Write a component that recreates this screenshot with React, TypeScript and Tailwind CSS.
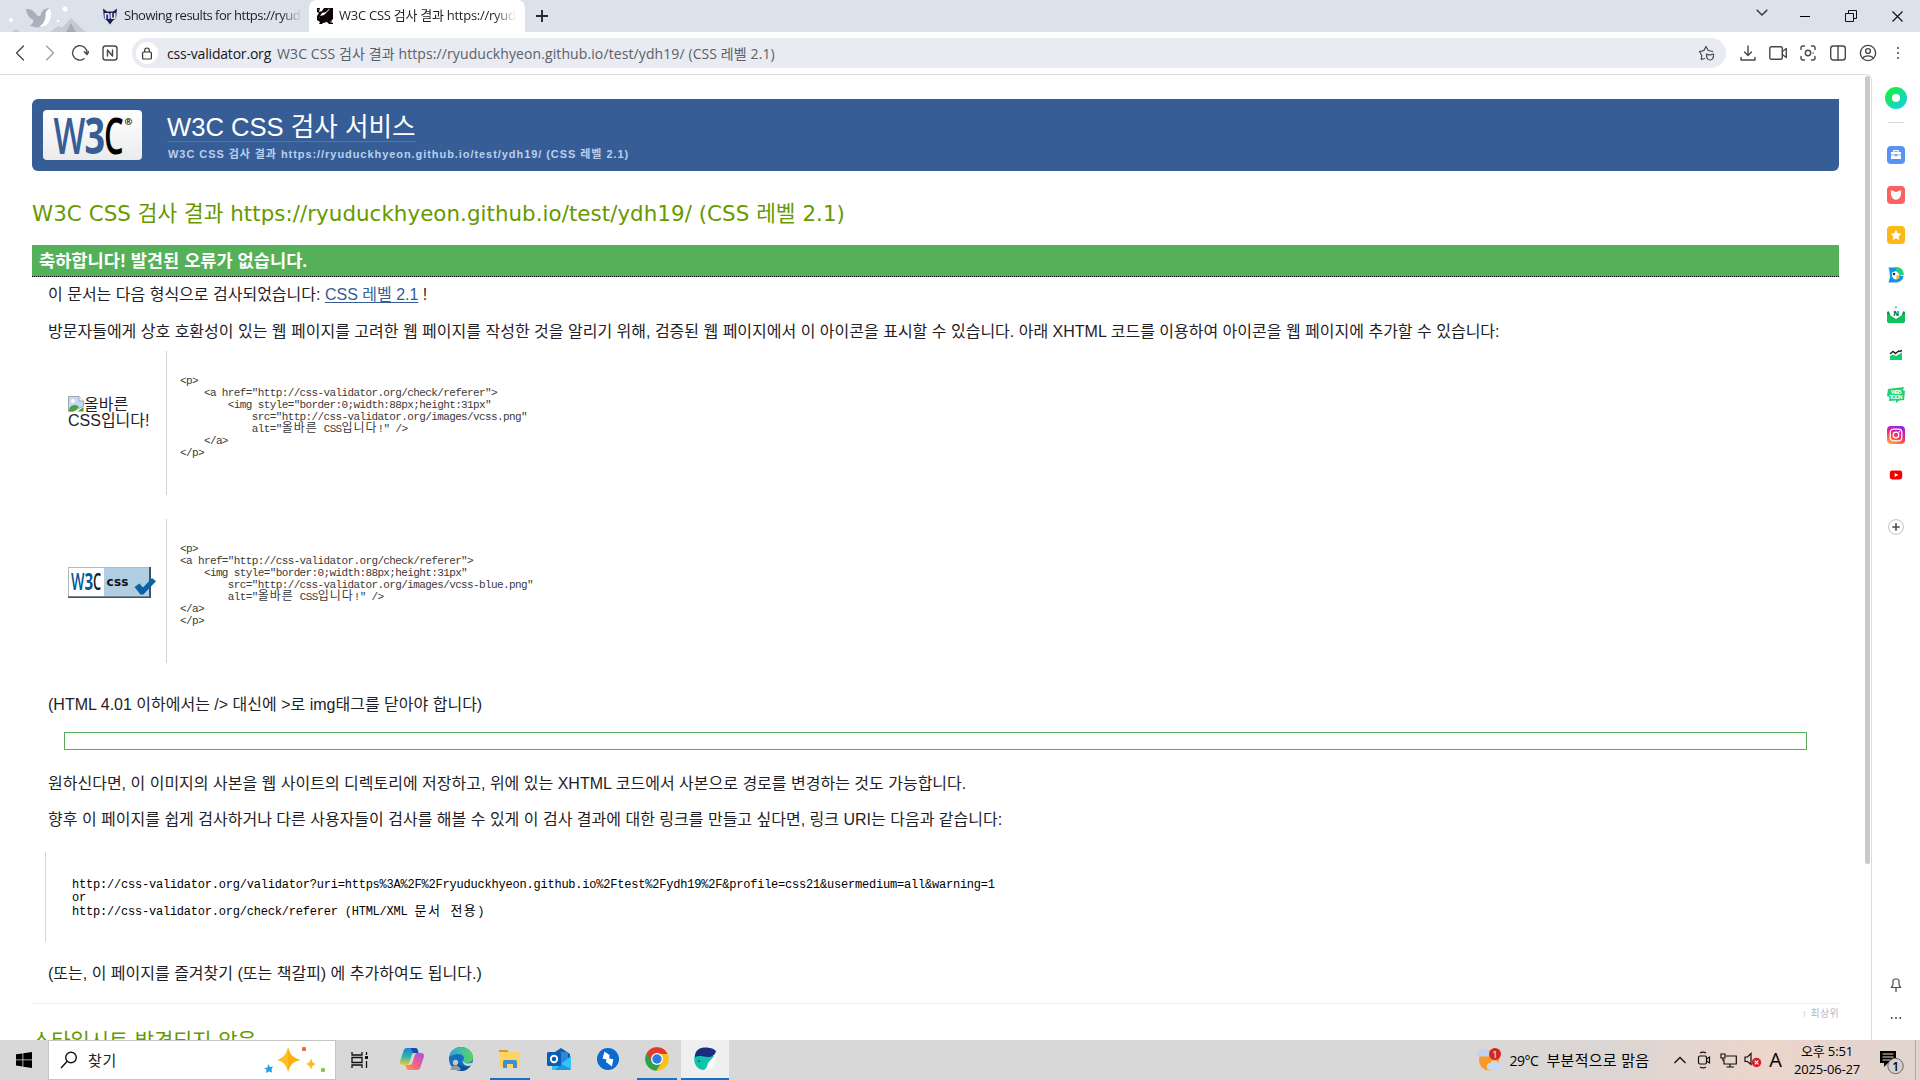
import type { ReactNode } from "react";

const UI = "font-['Open_Sans','Noto_Sans_CJK_KR',sans-serif]";

/* ---------- logos ---------- */

function W3CMark({ className, blue, dark }: { className: string; blue: string; dark: string }) {
  return (
    <svg viewBox="0 0 80 38" className={`overflow-visible ${className}`} fontFamily="Open Sans, sans-serif" fontWeight="600">
      <text transform="translate(-.5 37) scale(.66 1)" fontSize="51" fill={blue}>W</text>
      <text transform="translate(30.500 36.600) scale(.72 1)" fontSize="50" fontWeight="700" fill={blue}>3</text>
      <text transform="translate(50 36.600) scale(.62 1)" fontSize="50" fill={dark}>C</text>
      <text x="70.500" y="8" fontSize="9.500" fontWeight="700" fill={dark}>®</text>
    </svg>
  );
}

function CssBadge() {
  return (
    <svg viewBox="0 0 88 31" className="h-[31px] w-[88px]">
      <rect x="0" y="0" width="83" height="31" fill="#3f5361" />
      <rect x="0" y="0" width="81" height="29.5" fill="#b3b9be" />
      <rect x="1" y="1" width="35" height="28" fill="#ffffff" />
      <rect x="36" y="1" width="45" height="28" fill="#b0cde1" />
      <g fontFamily="Open Sans, sans-serif" fontWeight="600">
        <text transform="translate(3 22.500) scale(.62 1)" fontSize="23" fill="#005a9c">W</text>
        <text transform="translate(16.500 22.500) scale(.66 1)" fontSize="23" fontWeight="700" fill="#005a9c">3</text>
        <text transform="translate(25 22.500) scale(.56 1)" fontSize="23" fill="#1a1a1a">C</text>
      </g>
      <text x="38.5" y="18.5" fontSize="12" fontWeight="700" fontFamily="DejaVu Sans, sans-serif" fill="#111" textLength="22">css</text>
      <path d="M66.500 20l5-3.500 3.500 4L84 11l4 3.200-12.600 13.300h-3z" fill="#0b63a5" />
    </svg>
  );
}

function BrokenImage() {
  return (
    <svg viewBox="0 0 16 16" className="-mb-0.5 inline-block size-4 align-baseline">
      <path d="M.5 .5h10.500l4.500 4.500v5L5 15.500H.5z" fill="#c5d9f4" stroke="#a0a6ad" />
      <path d="M11 .5v4.500h4.500" fill="#fff" stroke="#a0a6ad" />
      <circle cx="5" cy="5" r="2" fill="#fff" />
      <path d="M1 15c0-4 3-6 6-6 2 0 3 1 4 2l-4.500 4z" fill="#4da13d" />
      <path d="M15.500 11v4.500H9.500z" fill="#4da13d" />
    </svg>
  );
}

/* ---------- browser chrome ---------- */

function WhaleStrip() {
  return (
    <svg viewBox="0 0 94 32" className="h-8 w-[94px] shrink-0">
      <path d="M50 32l8-6 4 2 9-10 6 6 9 8z" fill="#c5cbd4" />
      <path d="M66 32l5-9 5 9z" fill="#a7aeb9" />
      <path d="M12 32l4-3 4 3z" fill="#c3c9d2" />
      <circle cx="11" cy="20" r="2" fill="#fff" />
      <circle cx="65" cy="9" r="2.500" fill="#fff" />
      <circle cx="58" cy="21" r="1.300" fill="#fff" />
      <path d="M26 9c4-.5 8 1.500 10 5 2 3 4 3 5 0 1-4 5-6 9-6 2.500 7 1 14-4 17.500-5 3-13 2-16 0 2-1 3.500-3 3.500-5.500C29 18 26.500 14 26 9z" fill="#a9b0bb" />
      <path d="M50 8c2.500 7 1 14-4 17.500-2 1-4.500 1.500-7 1.300 5-3 7-7.800 6.500-13C46 11 48 9 50 8z" fill="#fff" />
    </svg>
  );
}

function Tabs() {
  return (
    <div className={`flex h-8 shrink-0 items-stretch bg-[#dce2ea] text-[13px] text-[#1d1f22] ${UI}`}>
      <WhaleStrip />
      <div className="flex w-[215px] items-center pl-2">
        <svg viewBox="0 0 16 16" className="h-[17px] w-4 shrink-0">
          <path d="M1 0l4 3h6l4-3-1 10-3 2-3 4-3-4-3-2z" fill="#231a52" />
          <text x="2" y="10" fontSize="10" fontWeight="700" fontFamily="Liberation Sans" fill="#fff">nu</text>
        </svg>
        <div className="ml-1.5 w-[178px] overflow-hidden whitespace-nowrap tracking-[-0.49px] [mask-image:linear-gradient(90deg,#000_88%,transparent)]">
          Showing results for https://ryudu
        </div>
      </div>
      <div className="flex w-[216px] items-center rounded-t-lg bg-white pl-2">
        <svg viewBox="0 0 16 16" className="size-4 shrink-0">
          <rect width="16" height="16" fill="#0b0505" />
          <path d="M3 0l-1 4 3-1 2-3zM0 4l2 1-2 3zM13 0l-4 4-4 1-2 3 4-1 5-5zM16 11l-3 3 3 1zM6 15l4-1 2 2H5zM0 12l3 2-1 2H0z" fill="#fff" />
          <path d="M1 1h1v1H1zM14 13h1v1h-1zM2 9h1v1H2z" fill="#a33" />
        </svg>
        <div className="ml-1.5 w-[177px] overflow-hidden whitespace-nowrap tracking-[-0.26px] [mask-image:linear-gradient(90deg,#000_88%,transparent)]">
          W3C CSS 검사 결과 https://ryud
        </div>
      </div>
      <svg viewBox="0 0 14 14" className="mt-[9px] ml-2.5 size-3.5" stroke="#26292d" strokeWidth="1.900">
        <path d="M7 1v12M1 7h12" />
      </svg>
      <div className="ml-auto flex items-center pr-[17px]">
        <svg viewBox="0 0 12 7" className="mr-8 mb-[7px] h-[7px] w-3" fill="none" stroke="#333" strokeWidth="1.300">
          <path d="M.7 .7L6 6l5.300-5.300" />
        </svg>
        <div className="mr-[35px] h-px w-2.5 bg-black" />
        <svg viewBox="0 0 12 12" className="mr-[35px] size-3" fill="none" stroke="#111" strokeWidth="1">
          <path d="M.5 3.500h8v8h-8zM3.500 3.500v-3h8v8h-3" />
        </svg>
        <svg viewBox="0 0 11 11" className="size-[11px]" stroke="#111" strokeWidth="1.200">
          <path d="M.5 .5l10 10M10.500 .5l-10 10" />
        </svg>
      </div>
    </div>
  );
}

function Icon({ className = "", children }: { className?: string; children: ReactNode }) {
  return (
    <svg viewBox="0 0 18 18" className={`size-[18px] shrink-0 ${className}`} fill="none" stroke="#45484d" strokeWidth="1.400" strokeLinecap="round" strokeLinejoin="round">
      {children}
    </svg>
  );
}

function Toolbar() {
  return (
    <div className={`flex h-[42px] shrink-0 items-center bg-white pl-[11px] text-[14px] ${UI}`}>
      <Icon className="mr-3"><path d="M12.500 2L5.500 9l7 7" /></Icon>
      <Icon className="mr-3"><path d="M5.500 2l7 7-7 7" stroke="#9b9ea3" /></Icon>
      <Icon className="mr-3">
        <path d="M13 14.700A7.200 7.200 0 1 1 16 9" />
        <path d="M13.300 7.700L16 10.500l2-3" />
      </Icon>
      <Icon className="mr-[13px]">
        <rect x="2" y="2" width="14" height="14" rx="2.500" />
        <path d="M6.500 12V6l5 6V6" />
      </Icon>
      <div className="mr-[13px] flex h-[30px] flex-1 items-center rounded-full bg-[#e8ebf2] pr-2.5 pl-1">
        <div className="flex size-[22px] items-center justify-center rounded-full bg-white">
          <svg viewBox="0 0 12 13" className="h-[13px] w-3" fill="none" stroke="#333" strokeWidth="1.200">
            <rect x="1.600" y="5" width="8.800" height="7" rx="1" />
            <path d="M3.700 5V3.300a2.300 2.300 0 0 1 4.600 0V5" />
          </svg>
        </div>
        <span className="ml-[9px] tracking-[-0.19px] text-[#17181a]">css-validator.org</span>
        <span className="ml-1.5 tracking-[0.1px] text-[#5c6066]">
          W3C CSS 검사 결과 https://ryuduckhyeon.github.io/test/ydh19/ (CSS 레벨 2.1)
        </span>
        <Icon className="ml-auto">
          <path d="M6.500 14.500l-3.200 1 .4-4.300L1.500 7.500 5.800 6.600 8 2.500l2.200 4 4.500 1" strokeWidth="1.200" />
          <path d="M8.500 10c1 0 1.500.3 2 .8h2.500c.5-.5 1-.8 2.500-.8.3 4-1 6-3.500 6s-3.700-2-3.500-6z" strokeWidth="1.200" />
        </Icon>
      </div>
      <div className="flex items-center gap-3 pr-[13px]">
        <Icon><path d="M9 2v9M5.500 8L9 11.500 12.500 8M2 13.500V16h14v-2.500" /></Icon>
        <Icon>
          <rect x=".8" y="2.800" width="12.500" height="12.400" rx="1.500" />
          <path d="M13.300 7.500L17.300 4.500v9l-4-3" />
        </Icon>
        <Icon>
          <path d="M2 5.500V4a2 2 0 0 1 2-2h1.500M12.500 2H14a2 2 0 0 1 2 2v1.500M16 12.500V14a2 2 0 0 1-2 2h-1.500M5.500 16H4a2 2 0 0 1-2-2v-1.500" />
          <circle cx="9" cy="9" r="2.700" />
          <path d="M14 9h.1" />
        </Icon>
        <Icon>
          <rect x="1.700" y="2" width="14.600" height="14" rx="2.500" />
          <path d="M9 2v14" />
        </Icon>
        <Icon>
          <circle cx="9" cy="9" r="7.600" />
          <circle cx="9" cy="7" r="2.400" />
          <path d="M3.800 14.300c1.500-3.300 8.900-3.300 10.400 0" />
        </Icon>
        <Icon><path d="M9 4v.1M9 9v.1M9 14v.1" strokeWidth="2" /></Icon>
      </div>
    </div>
  );
}

function Tile({ className = "", children }: { className?: string; children?: ReactNode }) {
  return (
    <div className={`mb-[22px] flex size-[18px] items-center justify-center ${className}`}>
      <svg viewBox="0 0 18 18" className="size-[18px]">{children}</svg>
    </div>
  );
}

function Sidebar() {
  return (
    <div className="flex w-12 shrink-0 flex-col items-center bg-white pt-[13px]">
      <div className="flex size-[22px] items-center justify-center rounded-full bg-[linear-gradient(135deg,#17ee4c_20%,#12cfe8_90%)]">
        <div className="size-2 rounded-full bg-white" />
      </div>
      <div className="mt-[13px] mb-[23px] h-px w-4 bg-[#d9dadc]" />
      <Tile className="rounded bg-[#5a93f2]">
        <path d="M4 6h10v2.500H4zM4 9.300h10V13H4z" fill="#fff" />
        <path d="M6.700 6V4.600h4.600V6" fill="none" stroke="#fff" strokeWidth="1.100" />
        <path d="M8 8.500h2v1.800H8z" fill="#5a93f2" />
      </Tile>
      <Tile className="rounded bg-[#fb6161]">
        <path d="M4 4.500c2 0 3.300 .5 4 1.500h2c.7-1 2-1.500 4-1.500.6 6-1.500 9.200-5 9.200S3.400 10.500 4 4.500z" fill="#fff" />
      </Tile>
      <Tile className="rounded bg-[#fbb816]">
        <path d="M9 3.800l1.700 3.400 3.600.5-2.600 2.600.6 3.700L9 12.200 5.700 14l.6-3.700L3.700 7.700l3.600-.5z" fill="#fff" />
      </Tile>
      <Tile>
        <path d="M1.500 1.500h5L10 1v8l6.500 1c0 3-3 6-7 6.500H1.500L3 11 2.500 5z" fill="#1295ef" />
        <path d="M8 1c5-.5 9 2.500 8.700 8H11z" fill="#24d07a" />
        <path d="M5 6.500l4-1.500 3 3v4l-3 1.500c-3 0-4.500-3-4-7z" fill="#fff" />
        <circle cx="7" cy="8" r="1.300" fill="#13355f" />
        <path d="M9.500 9h3c0 3-1 4-3.500 4.500z" fill="#fdc62e" />
      </Tile>
      <Tile>
        <path d="M0 6l9-5 9 5v8a3 3 0 0 1-3 3H3a3 3 0 0 1-3-3z" fill="#0b8a46" />
        <path d="M0 2l6 .5L9 .5l3 2 6-.5-3 6v2l-6 4-6-4V8z" fill="#fff" />
        <path d="M7.500 1.500L9 .3l1.500 1.200z" fill="#0b8a46" />
        <path d="M0 7l9 6 9-6v7.500a2.500 2.500 0 0 1-2.500 2.500h-13A2.500 2.500 0 0 1 0 14.500z" fill="#0fc25e" />
        <text x="6.200" y="9.500" fontSize="7" fontWeight="800" fontFamily="Open Sans" fill="#0b7a3d">N</text>
      </Tile>
      <Tile>
        <path d="M3 14V10l3-1.500 3 1.500 6-3.500V14z" fill="#14d069" />
        <path d="M3 8l3-2.500 2.500 2 3-2.500 1 .5L15 4.500" fill="none" stroke="#222" strokeWidth="1.400" />
      </Tile>
      <Tile>
        <path d="M1 3l16-2-1 3 2 1-1 9-5 .5-3 2.500v-2.500L2 15l.5-4L0 10z" fill="#1fd172" />
        <g fontFamily="Liberation Sans" fontSize="5.500" fontWeight="700" fill="#fff">
          <text x="4" y="8" textLength="10.500">WEB</text>
          <text x="2.500" y="12.500" textLength="13">TOON</text>
        </g>
      </Tile>
      <Tile className="rounded bg-[linear-gradient(25deg,#fdb13c_5%,#f8355b_45%,#d21bb5_65%,#7a2be8_95%)]">
        <g fill="none" stroke="#fff" strokeWidth="1.300">
          <rect x="3.200" y="3.200" width="11.600" height="11.600" rx="3.200" />
          <circle cx="9" cy="9" r="2.800" />
        </g>
        <circle cx="12.400" cy="5.600" r=".8" fill="#fff" />
      </Tile>
      <Tile>
        <rect x="2.800" y="4.500" width="12.400" height="9" rx="2.400" fill="#f00000" />
        <path d="M7.700 7l3.600 2-3.600 2z" fill="#fff" />
      </Tile>
      <svg viewBox="0 0 16 16" className="mt-[13px] size-4">
        <circle cx="8" cy="8" r="7.400" fill="#fff" stroke="#bfc1c4" />
        <path d="M8 4.300v7.400M4.300 8h7.400" stroke="#4a4d52" strokeWidth="1.600" />
      </svg>
      <svg viewBox="0 0 12 14" className="mt-auto mb-6 h-3.5 w-3" fill="none" stroke="#45484d" strokeWidth="1.200">
        <path d="M3 3a2 2 0 0 1 2-2h2a2 2 0 0 1 2 2v3.500l1.500 3h-9l1.500-3zM6 9.500V14" />
      </svg>
      <svg viewBox="0 0 12 4" className="mb-5 h-1 w-3" fill="#45484d">
        <circle cx="1.700" cy="2" r="1" /><circle cx="6" cy="2" r="1" /><circle cx="10.300" cy="2" r="1" />
      </svg>
    </div>
  );
}

/* ---------- validator page ---------- */

const ALT = (
  <span className="text-[12px] tracking-[0.95px]">올바른</span>
);
const ALT_END = (
  <span className="text-[12px] tracking-[0.95px]">입니다</span>
);

function CodeSample({ lines }: { lines: ReactNode[] }) {
  return (
    <div className="h-36 border-l border-[#d5d5d5] pt-6 pl-[13px] font-['Liberation_Mono','Noto_Sans_CJK_KR',monospace] text-[11px] tracking-[-0.62px] text-[#3a3a3a]">
      {lines.map((line, i) => (
        <div key={i} className="h-3 leading-3 whitespace-pre">{line}</div>
      ))}
    </div>
  );
}

function ValidatorPage() {
  return (
    <div className="min-w-0 flex-1 overflow-hidden pt-6 pr-[18px] pl-8 font-['Liberation_Sans','Noto_Sans_CJK_KR',sans-serif] text-[16px] whitespace-nowrap text-[#1f2126]">
      <div className="flex h-[72px] rounded-l-md rounded-br-md bg-[#365d95] pt-[11px] pl-[11px]">
        <div className="flex h-[50px] w-[99px] rounded bg-[linear-gradient(#ffffff,#ebebeb)] pt-[7px] pl-[11px]">
          <W3CMark className="h-[38px] w-20" blue="#365d95" dark="#000" />
        </div>
        <div className="ml-[25px]">
          <div className="h-[32px] w-[248px] border-b border-[#5075ab] text-[25.6px] leading-[34px] text-white">W3C CSS 검사 서비스</div>
          <div className="mt-1 pl-px text-[11px] leading-[16px] font-bold tracking-[0.94px] text-[#b9d0f0]">
            W3C CSS 검사 결과 https://ryuduckhyeon.github.io/test/ydh19/ (CSS 레벨 2.1)
          </div>
        </div>
      </div>

      <h2 className="mt-[27px] h-[30px] font-['DejaVu_Sans','Noto_Sans_CJK_KR',sans-serif] text-[21.4px] leading-[32px] tracking-[0.04px] text-[#669900]">
        W3C CSS 검사 결과 https://ryuduckhyeon.github.io/test/ydh19/ (CSS 레벨 2.1)
      </h2>

      <div className="mt-[17px] h-8 border-b border-dotted border-black bg-[#55b05a] pl-[7px] text-[17.6px] leading-[33px] font-bold text-white">
        축하합니다! 발견된 오류가 없습니다.
      </div>

      <div className="pl-4">
        <p className="mt-[7px] h-5 leading-[22px]">
          이 문서는 다음 형식으로 검사되었습니다:{" "}
          <a className="text-[#365d95] underline underline-offset-2">CSS 레벨 2.1</a> !
        </p>
        <p className="mt-[17px] h-5 leading-[22px]">
          방문자들에게 상호 호환성이 있는 웹 페이지를 고려한 웹 페이지를 작성한 것을 알리기 위해, 검증된 웹 페이지에서 이 아이콘을 표시할 수 있습니다. 아래 XHTML 코드를 이용하여 아이콘을 웹 페이지에 추가할 수 있습니다:
        </p>

        <div className="mt-2.5 flex">
          <div className="w-[118px] pt-[45px] pl-5 leading-4">
            <div><BrokenImage />올바른</div>
            <div>CSS입니다!</div>
          </div>
          <CodeSample
            lines={[
              "<p>",
              '    <a href="http://css-validator.org/check/referer">',
              '        <img style="border:0;width:88px;height:31px"',
              '            src="http://css-validator.org/images/vcss.png"',
              <>{'            alt="'}{ALT}{" CSS"}{ALT_END}{'!" />'}</>,
              "    </a>",
              "</p>",
            ]}
          />
        </div>
        <div className="mt-6 flex">
          <div className="w-[118px] pt-12 pl-5"><CssBadge /></div>
          <CodeSample
            lines={[
              "<p>",
              '<a href="http://css-validator.org/check/referer">',
              '    <img style="border:0;width:88px;height:31px"',
              '        src="http://css-validator.org/images/vcss-blue.png"',
              <>{'        alt="'}{ALT}{" CSS"}{ALT_END}{'!" />'}</>,
              "</a>",
              "</p>",
            ]}
          />
        </div>

        <p className="mt-[31px] h-5 leading-[22px]">(HTML 4.01 이하에서는 /&gt; 대신에 &gt;로 img태그를 닫아야 합니다)</p>
        <div className="mt-[18px] mr-8 ml-4 h-[18px] border border-[#55b05a]" />
        <p className="mt-[23px] h-5 leading-[22px]">
          원하신다면, 이 이미지의 사본을 웹 사이트의 디렉토리에 저장하고, 위에 있는 XHTML 코드에서 사본으로 경로를 변경하는 것도 가능합니다.
        </p>
        <p className="mt-4 h-5 leading-[22px]">
          향후 이 페이지를 쉽게 검사하거나 다른 사용자들이 검사를 해볼 수 있게 이 검사 결과에 대한 링크를 만들고 싶다면, 링크 URI는 다음과 같습니다:
        </p>
        <div className="mt-[23px] -ml-[3px] h-[90px] border-l border-[#d5d5d5] pt-[27px] pl-[26px] font-['Liberation_Mono','Noto_Sans_CJK_KR',monospace] text-[12px] leading-[13px] tracking-[-0.21px] text-black">
          <div>http://css-validator.org/validator?uri=https%3A%2F%2Fryuduckhyeon.github.io%2Ftest%2Fydh19%2F&amp;profile=css21&amp;usermedium=all&amp;warning=1</div>
          <div>or</div>
          <div className="h-[13px] leading-[13px]">http://css-validator.org/check/referer (HTML/XML <span className="text-[13px] tracking-[1.4px]">문서 전용</span>)</div>
        </div>
        <p className="mt-[21px] h-5 leading-[22px]">(또는, 이 페이지를 즐겨찾기 (또는 책갈피) 에 추가하여도 됩니다.)</p>
      </div>

      <div className="mt-5 h-px bg-[#ebebeb]" />
      <div className="mt-[3px] h-3.5 text-right text-[10px] leading-3.5 tracking-[0.3px] text-[#b3b8c4]">↑ 최상위</div>
      <h2 className="mt-[5px] font-['DejaVu_Sans','Noto_Sans_CJK_KR',sans-serif] text-[21px] leading-[30px] tracking-[-0.1px] text-[#669900]">
        스타일시트 발견되지 않음
      </h2>
    </div>
  );
}

/* ---------- taskbar ---------- */

function TaskIcon({ className = "", children }: { className?: string; children: ReactNode }) {
  return (
    <div className={`flex h-10 shrink-0 items-center justify-center border-b-2 ${className}`}>
      <svg viewBox="0 0 24 24" className="size-6">{children}</svg>
    </div>
  );
}

function Taskbar() {
  return (
    <div className={`flex h-10 shrink-0 items-center bg-[linear-gradient(90deg,#d8d8d8_0%,#d8d8d8_74%,#dcd6d3_84%,#ecd5cb_92%,#e0d4d0_100%)] text-black ${UI}`}>
      <div className="flex w-12 justify-center">
        <svg viewBox="0 0 16 16" className="size-4">
          <path d="M0 2.300L6.500 1.400v6.100H0zM7.300 1.300L16 0v7.500H7.300zM0 8.300h6.500v6.200L0 13.600zM7.300 8.300H16V16l-8.700-1.300z" />
        </svg>
      </div>
      <div className="flex h-full w-[288px] items-center border border-[#c4c4c4] bg-white pl-[11px]">
        <svg viewBox="0 0 18 18" className="size-[18px]" fill="none" stroke="#111" strokeWidth="1.400">
          <circle cx="11" cy="6.500" r="5.300" />
          <path d="M7 10.500L1 17" />
        </svg>
        <span className="ml-2.5 text-[15px] tracking-[0.8px] text-[#222]">찾기</span>
        <svg viewBox="0 0 64 32" className="mr-2 ml-auto h-8 w-16">
          <path d="M25 3c2 8 4 10 12 13-8 2-10 5-12 12-2-7-4-10-11-12 7-3 9-5 11-13z" fill="#fdc220" />
          <path d="M25 3c2 8 4 10 12 13-8 2-10 5-12 12V16z" fill="#f9b110" />
          <path d="M48 14c1 4 2 5 5 6-3 1-4 2-5 6-1-4-2-5-5-6 3-1 4-2 5-6z" fill="#fbb928" />
          <path d="M5 20l2 3 3-.5-1.500 3 .5 3-3-1-3 1.500.5-3.500L1 24l3.500-.5z" fill="#1fa4e6" />
          <circle cx="41" cy="5" r="2.200" fill="#ee6a33" />
          <circle cx="60" cy="26" r="2.200" fill="#8cc152" />
        </svg>
      </div>
      <div className="flex h-full w-12 items-center justify-center">
        <svg viewBox="0 0 18 16" className="h-4 w-[18px]" fill="none" stroke="#111" strokeWidth="1.300">
          <path d="M1 0v3h10V0M1 16v-3h10v3M1 5.500h10v5H1zM15.500 0v3M15.500 9v7" />
          <path d="M14 4h3v3h-3z" fill="#111" stroke="none" />
        </svg>
      </div>
      <TaskIcon className="ml-[3px] w-[49px] border-transparent">
        <defs>
          <linearGradient id="ribbonCool" x1="0" y1="0" x2="0" y2="1"><stop offset="0" stopColor="#1d7fe0" /><stop offset=".5" stopColor="#2fb6a8" /><stop offset="1" stopColor="#f0c63a" /></linearGradient>
          <linearGradient id="ribbonWarm" x1="1" y1="0" x2="0" y2="1"><stop offset="0" stopColor="#a455e8" /><stop offset=".5" stopColor="#ef5d8e" /><stop offset="1" stopColor="#ff9a4a" /></linearGradient>
        </defs>
        <path d="M7 1h8c2 0 2.500 1 3 3l.5 2h-4c-2 0-2.500 1-3 3l-2 6c-.6 2-1 3-3 3H3c-2 0-3.500-1-2.800-4L3.500 4C4 2 5 1 7 1z" fill="url(#ribbonCool)" />
        <path d="M11 1h4c2 0 2.500 1 3 3l.5 2h-4c-1.500 0-2-.5-3-3z" fill="#1a49b8" />
        <path d="M17 23H9c-2 0-2.500-1-3-3l-.5-2h4c2 0 2.500-1 3-3l2-6c.6-2 1-3 3-3H21c2 0 3.500 1 2.800 4L20.500 20c-.5 2-1.500 3-3.500 3z" fill="url(#ribbonWarm)" />
      </TaskIcon>
      <TaskIcon className="w-[49px] border-transparent">
        <defs>
          <linearGradient id="edgeWave" x1="0" y1="0" x2="1" y2="0"><stop offset="0" stopColor="#2aa5e6" /><stop offset="1" stopColor="#5ad65c" /></linearGradient>
        </defs>
        <circle cx="12" cy="12" r="12" fill="#1470bd" />
        <path d="M.5 10C2 3 7 0 12 0c7 0 12 5 12 10 0 4-3 6-6.500 6-3 0-4-1.500-3-3 1.500-3-1-6-5-6-4 0-7 1-9 3z" fill="url(#edgeWave)" />
        <path d="M9 12c-1 5 3 9 12 7-2 3-5 5-9 5-4-1-6-7-3-12z" fill="#0f4f96" />
        <path d="M13.500 13c1 3 4.500 4.500 10 2.500l-1 3c-5.500 1.500-9-1-9-5.500z" fill="#d8d8d8" />
        <circle cx="6.500" cy="15.500" r="2.700" fill="#c9c9c9" />
        <path d="M1.500 23c0-6 10-6 10 0z" fill="#9b9b9b" />
      </TaskIcon>
      <div className="flex w-[49px] justify-center">
        <TaskIcon className="w-10 border-[#1272c6]">
          <path d="M1 3h8l2 2H1z" fill="#d69a1e" />
          <path d="M1 5h20a1 1 0 0 1 1 1v14H1z" fill="#fcd364" />
          <path d="M5 21v-6a2 2 0 0 1 2-2h10a2 2 0 0 1 2 2v6h-4v-4H9v4z" fill="#3f8fd0" />
        </TaskIcon>
      </div>
      <TaskIcon className="w-[49px] border-transparent">
        <path d="M5 7l9-6 9 6v14a2 2 0 0 1-2 2H7a2 2 0 0 1-2-2z" fill="#0f5ca8" />
        <path d="M8 5h13v12H8z" fill="#2b87d8" />
        <path d="M5 12l9 5 10-8v12a2 2 0 0 1-2 2H5z" fill="#34c3f4" />
        <path d="M14 17l10 5-1.500 1H8z" fill="#1b98e4" />
        <rect y="5" width="14" height="14" rx="1.500" fill="#0a5cb5" />
        <circle cx="7" cy="12" r="3.200" fill="none" stroke="#fff" strokeWidth="1.900" />
      </TaskIcon>
      <TaskIcon className="w-[49px] border-transparent">
        <circle cx="12" cy="12" r="11" fill="#0b6ad0" />
        <path d="M8.500 4.500l5 3.500-.2 3.500 4 .8-1.300 7.200-6-4.500.5-2.500-4-1z" fill="#fff" />
      </TaskIcon>
      <div className="flex w-[49px] justify-center">
        <TaskIcon className="w-10 border-[#1272c6]">
          <circle cx="12" cy="12" r="11.800" fill="#fbc116" />
          <path d="M1.800 6a11.800 11.800 0 0 0 9.500 17.800L17 14.800 12 12z" fill="#2da14c" />
          <path d="M1.800 6A11.800 11.800 0 0 1 22.600 7H12L6.500 14z" fill="#e23b2e" />
          <circle cx="12" cy="12" r="6" fill="#fff" />
          <circle cx="12" cy="12" r="4.700" fill="#2f7be6" />
        </TaskIcon>
      </div>
      <TaskIcon className="w-12 border-[#1272c6] bg-[#efefef]">
        <path d="M2 8c3-2 8-2 12 0l7 1c1 6-1 10-5 12.500C10 25 3 22 1.500 15 1 12 1 10 2 8z" fill="#10c4ac" />
        <path d="M22.500 6c2 9-1 17.500-12 17.500 5-3 3-7 6.500-10 2-2 4.500-4 5.500-7.500z" fill="#f6fbfa" />
        <path d="M3 5C5 1 10 0 14 .5c4 .3 7 1.500 9 3.500-1 4-4 6-8 6-3 0-5-1-7-1-2 0-4 0-6 1 0-2 0-3 1-5z" fill="#1c2a80" />
        <circle cx="6" cy="14" r="1" fill="#0a5c58" />
      </TaskIcon>

      <div className="ml-auto flex h-full items-center">
        <svg viewBox="0 0 26 24" className="h-6 w-[26px]">
          <circle cx="12" cy="12.500" r="10" fill="#f99b24" />
          <path d="M3 8.500a3 3 0 0 1 0-6c1-2.500 6-3 7.500 0 3.500 0 3.500 6 0 6z" fill="#bcd3f5" />
          <path d="M13 22a3.500 3.500 0 0 1 .5-7c1.500-3.500 7-3 8 0 4.500 0 4.500 7 0 7z" fill="#c5daf7" />
          <circle cx="18" cy="6" r="6" fill="#cf2a1e" />
          <text x="15.300" y="9.500" fontSize="9.500" fill="#fff">1</text>
        </svg>
        <span className="ml-1.5 text-[14px] tracking-[-0.45px]">29°C</span>
        <span className="ml-2 text-[15px] tracking-[0.3px]">부분적으로 맑음</span>
        <svg viewBox="0 0 12 8" className="ml-[25px] h-2 w-3" fill="none" stroke="#111" strokeWidth="1.300"><path d="M.5 7L6 1.500 11.500 7" /></svg>
        <svg viewBox="0 0 14 18" className="ml-[11px] h-[18px] w-3.5" fill="none" stroke="#111" strokeWidth="1.200">
          <rect x="1.500" y="5" width="8" height="8" rx="1.500" />
          <path d="M9.500 8l3-2v6l-3-2M3 2c2-1.300 4-1.300 6 0M3 16c2 1.300 4 1.300 6 0" />
        </svg>
        <svg viewBox="0 0 17 15" className="ml-[9px] h-[15px] w-[17px]" fill="none" stroke="#111" strokeWidth="1.200">
          <path d="M6 3h10.300v8H4V6.500M10 11v3M6.500 14h7.500" />
          <path d="M1 1h4v4H1zM3 5v3" />
        </svg>
        <svg viewBox="0 0 18 16" className="ml-[7px] h-4 w-[18px]" fill="none" stroke="#111" strokeWidth="1.200">
          <path d="M1 5h2.500L7 1.500v11L3.500 9.500H1z" />
          <circle cx="12.500" cy="10.500" r="4.700" fill="#d5202c" stroke="none" />
          <path d="M10.700 8.700l3.600 3.600M14.300 8.700l-3.600 3.600" stroke="#fff" />
        </svg>
        <span className="ml-[7px] text-[20px] leading-10">A</span>
        <div className="ml-[11px] flex w-[68px] flex-col items-center text-[13px] leading-[18px]">
          <span className="tracking-[-0.15px]">오후 5:51</span>
          <span className="tracking-[-0.18px]">2025-06-27</span>
        </div>
        <svg viewBox="0 0 26 26" className="mt-1 ml-[18px] h-[26px] w-[26px]">
          <path d="M1 2h16v12H9l-4 4v-4H1z" fill="#000" />
          <path d="M3.500 5h11M3.500 8h11M3.500 11h8" stroke="#e5d6d0" strokeWidth="1" />
          <circle cx="16.500" cy="17" r="7.700" fill="#d5d0ce" stroke="#6d6967" />
          <text x="13.300" y="21.500" fontSize="12" fontWeight="600">1</text>
        </svg>
        <div className="ml-[10px] h-full w-[5px] border-l border-[#b3aaa6]" />
      </div>
    </div>
  );
}

export default function App() {
  return (
    <div className="flex h-[1080px] w-[1920px] flex-col overflow-hidden bg-white">
      <Tabs />
      <Toolbar />
      <div className="flex min-h-0 flex-1">
        <div className="flex min-w-0 flex-1 rounded-tr-md border-t border-r border-[#dcdcdc]">
          <ValidatorPage />
          <div className="mt-px mr-px ml-2 w-[5px] shrink-0">
            <div className="h-[788px] rounded-full bg-[#c8c9ca]" />
          </div>
        </div>
        <Sidebar />
      </div>
      <Taskbar />
    </div>
  );
}
